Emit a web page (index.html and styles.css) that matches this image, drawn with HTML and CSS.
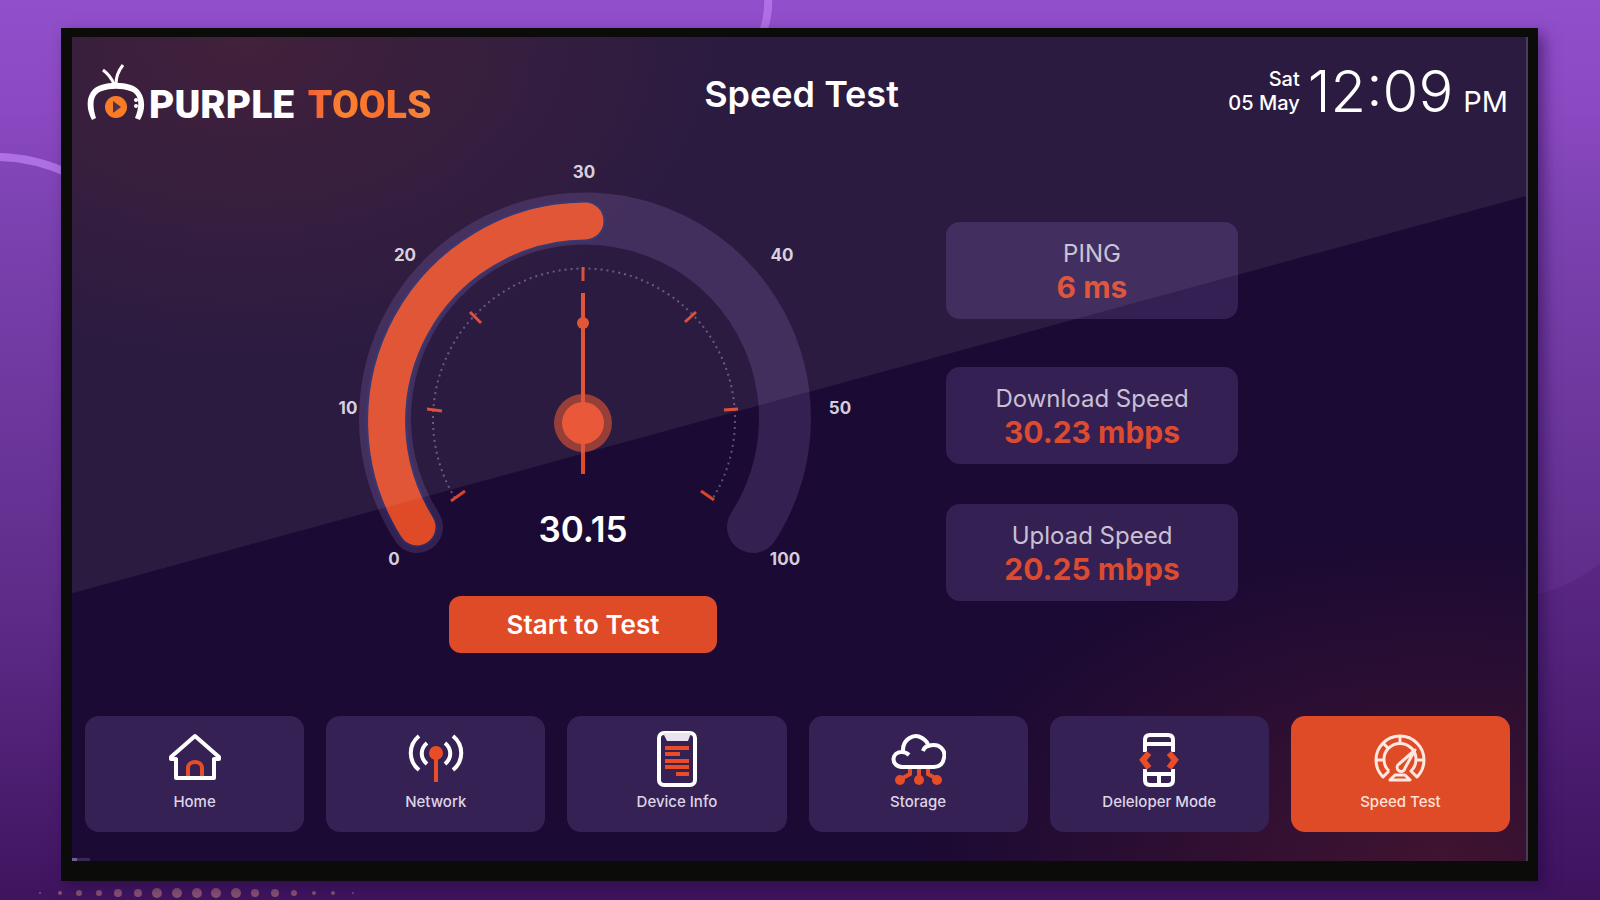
FILE: index.html
```html
<!DOCTYPE html>
<html lang="en">
<head>
    <meta charset="UTF-8">
    <meta name="viewport" content="width=device-width, initial-scale=1.0">
    <title>Purple Tools - Speed Test</title>
    <link rel="stylesheet" href="styles.css">
</head>
<body>
    <svg class="backdrop" viewBox="0 0 1600 900" preserveAspectRatio="none" aria-hidden="true">
        <path d="M1538 594 C1560 590 1580 578 1600 564 V900 H1538 Z" fill="#3c1060" opacity="0.2"/>
        <path d="M-4 157 C20 157 44 162 70 174" fill="none" stroke="#ae70e4" stroke-width="8"/>
        <path d="M768 -4 C769 12 767 22 762 34" fill="none" stroke="#ae70e4" stroke-width="8"/>
        <g fill="#8a5274">
            <circle cx="40" cy="893" r="1"/>
            <circle cx="60" cy="893" r="2"/>
            <circle cx="79" cy="893" r="3"/>
            <circle cx="99" cy="893" r="3"/>
            <circle cx="118" cy="893" r="4"/>
            <circle cx="138" cy="893" r="4"/>
            <circle cx="157" cy="893" r="5"/>
            <circle cx="177" cy="893" r="5"/>
            <circle cx="197" cy="893" r="5"/>
            <circle cx="216" cy="893" r="5"/>
            <circle cx="236" cy="893" r="5"/>
            <circle cx="255" cy="893" r="4"/>
            <circle cx="275" cy="893" r="4"/>
            <circle cx="294" cy="893" r="3"/>
            <circle cx="314" cy="893" r="2"/>
            <circle cx="333" cy="893" r="2"/>
            <circle cx="353" cy="893" r="1"/>
        </g>
    </svg>

    <div class="tv">
        <div class="screen">
            <header class="header">
                <div class="logo">
                    <svg class="logo-icon" width="58" height="58" viewBox="0 0 58 58" aria-hidden="true">
                        <path d="M27 20 C24 13 20 9 16 6" fill="none" stroke="#fff" stroke-width="3"/>
                        <path d="M29 20 C29 12 32 6 36 1" fill="none" stroke="#fff" stroke-width="3"/>
                        <path d="M5 56 C-3 42 0 25 14 21 C24 18 34 18 44 21 C57 25 61 42 53 56 L48 54 C53 42 53 30 43 27 C34 24 24 24 15 27 C5 30 5 42 9 54 Z" fill="#fff"/>
                        <circle cx="29" cy="43" r="11" fill="#f97316"/>
                        <path d="M26 37 L34 43 L26 49 Z" fill="#44213f"/>
                        <circle cx="49" cy="36" r="2" fill="#fff"/>
                        <circle cx="49" cy="42" r="2" fill="#fff"/>
                    </svg>
                    <span class="logo-text">PURPLE <span class="logo-accent">TOOLS</span></span>
                </div>
                <h1 class="title">Speed Test</h1>
                <div class="clock">
                    <div class="date">Sat<br>05 May</div>
                    <div class="time">12:09</div>
                    <div class="meridiem">PM</div>
                </div>
            </header>

            <main class="main">
                <section class="meter">
                    <svg class="gauge" viewBox="315 155 536 415" role="img" aria-label="Speed gauge">
                        <path d="M417 527 A200 200 0 1 1 753 527" fill="none" stroke="#7858a0" stroke-opacity="0.28" stroke-width="52" stroke-linecap="round"/>
                        <path d="M417 527 A200 200 0 0 1 585 221" fill="none" stroke="#2b2864" stroke-width="42" stroke-linecap="round"/>
                        <path d="M417 527 A200 200 0 0 1 585 221" fill="none" stroke="#df4a27" stroke-width="37" stroke-linecap="round"/>

                        <path d="M455 498 A151 151 0 1 1 713 498" fill="none" stroke="#5a5080" stroke-width="2" stroke-dasharray="2 4"/>
                        <g stroke="#d8452a" stroke-width="3">
                            <path d="M451 501 L465 491"/>
                            <path d="M427 409 L442 411"/>
                            <path d="M470 312 L481 323"/>
                            <path d="M583 267 L583 281"/>
                            <path d="M696 312 L685 322"/>
                            <path d="M724 410 L738 409"/>
                            <path d="M701 491 L714 500"/>
                        </g>

                        <circle cx="583" cy="423" r="29" fill="#df4a27" opacity="0.6"/>
                        <path d="M583 293 V474" stroke="#df4a27" stroke-width="4"/>
                        <circle cx="583" cy="323" r="6" fill="#df4a27"/>
                        <circle cx="583" cy="423" r="21" fill="#e84d2b"/>

                        <g class="gauge-label">
                            <text x="394" y="565">0</text>
                            <text x="348" y="414">10</text>
                            <text x="405" y="261">20</text>
                            <text x="584" y="178">30</text>
                            <text x="782" y="261">40</text>
                            <text x="840" y="414">50</text>
                            <text x="785" y="565">100</text>
                        </g>
                        <text class="gauge-value" x="583" y="542">30.15</text>
                    </svg>
                    <button class="start" type="button">Start to Test</button>
                </section>

                <section class="stats">
                    <div class="stat stat-ping">
                        <div class="stat-name">PING</div>
                        <div class="stat-value">6 ms</div>
                    </div>
                    <div class="stat">
                        <div class="stat-name">Download Speed</div>
                        <div class="stat-value">30.23 mbps</div>
                    </div>
                    <div class="stat">
                        <div class="stat-name">Upload Speed</div>
                        <div class="stat-value">20.25 mbps</div>
                    </div>
                </section>
            </main>

            <nav class="nav">
                <a class="nav-item" href="#">
                    <svg class="nav-icon" viewBox="0 0 56 56" aria-hidden="true">
                        <path class="accent" d="M21 46 V37 C21 29 35 29 35 37 V46"/>
                        <path class="line" d="M28 5 L52 26 V28 H47 V47 H9 V28 H4 V26 Z"/>
                    </svg>
                    <span>Home</span>
                </a>
                <a class="nav-item" href="#">
                    <svg class="nav-icon" viewBox="0 0 56 56" aria-hidden="true">
                        <path class="line" d="M11 5 C0 14 0 30 11 39"/>
                        <path class="line" d="M19 12 C12 18 12 27 19 33"/>
                        <path class="line" d="M37 12 C44 18 44 27 37 33"/>
                        <path class="line" d="M45 5 C56 14 56 30 45 39"/>
                        <path class="accent" d="M28 24 V51"/>
                        <circle cx="28" cy="22" r="7" fill="#e84d25"/>
                    </svg>
                    <span>Network</span>
                </a>
                <a class="nav-item" href="#">
                    <svg class="nav-icon" viewBox="0 0 56 56" aria-hidden="true">
                        <rect class="line" x="10" y="2" width="36" height="52" rx="5"/>
                        <path d="M14 2 H42 L39 10 H18 Z" fill="#e9e4f0"/>
                        <g class="accent">
                            <path d="M16 17 H40"/>
                            <path d="M16 23 H31"/>
                            <path d="M16 30 H40"/>
                            <path d="M16 36 H40"/>
                            <path d="M27 43 H40"/>
                        </g>
                    </svg>
                    <span>Device Info</span>
                </a>
                <a class="nav-item" href="#">
                    <svg class="nav-icon" viewBox="0 0 56 56" aria-hidden="true">
                        <g class="accent">
                            <path d="M20 36 V43 L11 48"/>
                            <path d="M29 36 V49"/>
                            <path d="M38 36 V43 L47 48"/>
                        </g>
                        <g fill="#e84d25">
                            <circle cx="10" cy="49" r="5"/>
                            <circle cx="29" cy="49" r="5"/>
                            <circle cx="47" cy="49" r="5"/>
                        </g>
                        <path class="line" d="M12 36 C0 35 1 20 13 21 C12 8 24 2 32 7 C37 10 38 13 38 15 C50 11 56 20 54 27 C53 33 49 36 44 36 Z"/>
                        <path class="line" d="M12 21 C15 21 17 22 19 24 M39 15 C36 15 34 17 33 20"/>
                    </svg>
                    <span>Storage</span>
                </a>
                <a class="nav-item" href="#">
                    <svg class="nav-icon" viewBox="0 0 56 56" aria-hidden="true">
                        <path class="line" d="M14 21 V9 Q14 4 19 4 H37 Q42 4 42 9 V21 M14 13 H42"/>
                        <path class="line" d="M14 38 V49 Q14 54 19 54 H37 Q42 54 42 49 V38 M14 43 H42 M28 43 V53"/>
                        <path class="accent thick" d="M18 22 L12 29 L18 37"/>
                        <path class="accent thick" d="M38 22 L44 29 L38 37"/>
                    </svg>
                    <span>Deleloper Mode</span>
                </a>
                <a class="nav-item active" href="#" aria-current="page">
                    <svg class="nav-icon" viewBox="0 0 56 56" aria-hidden="true">
                        <g class="dial">
                            <path d="M11 46 A24 24 0 1 1 45 46 L39 40 A16 16 0 1 0 17 40 Z" stroke="none"/>
                            <path d="M17 40 L11 46 A24 24 0 1 1 45 46 L39 40 A16 16 0 1 0 17 40"/>
                            <path d="M28 5 V12 M4 29 H12 M11 12 L17 18 M44 29 H52"/>
                            <path d="M27 33 L43 19 L33 37 A4 4 0 1 1 27 33 Z"/>
                            <path d="M23 44 H33 L38 49 H18 Z"/>
                        </g>
                    </svg>
                    <span>Speed Test</span>
                </a>
            </nav>

            <div class="status-mark"></div>
            <div class="glare"></div>
        </div>
    </div>
</body>
</html>
```
FILE: styles.css
```css
* {
    box-sizing: border-box;
}

body {
    margin: 0;
    min-height: 100vh;
    padding: 28px 62px 19px 61px;
    display: flex;
    font-family: Inter, "Liberation Sans", sans-serif;
    color: #fff;
    background: linear-gradient(#9150cb 0%, #8b49c2 12%, #7c42b1 24%, #5c2a86 70%, #3f145e 100%);
}

.backdrop {
    position: fixed;
    inset: 0;
    width: 100%;
    height: 100%;
}

/* TV frame */
.tv {
    position: relative;
    flex: 1;
    display: flex;
    padding: 9px 10px 20px 11px;
    background: #0b0b0a;
    box-shadow: 6px 6px 14px rgba(30, 5, 60, 0.5);
}

.screen {
    position: relative;
    flex: 1;
    display: flex;
    flex-direction: column;
    padding: 26px 16px 29px 13px;
    border-right: 2px solid #4a3d5c;
    background:
        radial-gradient(ellipse 500px 340px at 12% 0%, rgba(76, 24, 40, 0.5), rgba(76, 24, 40, 0)),
        radial-gradient(ellipse 520px 320px at 94% 100%, rgba(76, 22, 48, 0.75), rgba(76, 22, 48, 0)),
        #1b0a33;
}

.glare {
    position: absolute;
    inset: 0;
    background: rgba(255, 255, 255, 0.07);
    clip-path: polygon(0 0, 100% 0, 100% 19.3%, 0 67.5%);
    pointer-events: none;
}

.status-mark {
    position: absolute;
    left: 0;
    bottom: 0;
    width: 18px;
    height: 3px;
    background: linear-gradient(90deg, #6d6090 30%, #37285a 30%);
}

/* Header */
.header {
    display: grid;
    grid-template-columns: 1fr auto 1fr;
    align-items: center;
}

.logo {
    display: flex;
    align-items: flex-end;
    gap: 4px;
    padding-left: 2px;
}

.logo-text {
    font-family: Roboto, "Liberation Sans", sans-serif;
    font-weight: 900;
    font-size: 39px;
    line-height: 34px;
}

.logo-accent {
    margin-left: 4px;
    background: linear-gradient(90deg, #f2542a, #fb7a20 30%, #f8641c 60%, #f5802c);
    -webkit-background-clip: text;
    background-clip: text;
    color: transparent;
}

.title {
    margin: 0;
    padding: 2px 0 0 8px;
    font-size: 36px;
    font-weight: 600;
    line-height: 44px;
}

.clock {
    display: flex;
    justify-content: flex-end;
    align-items: baseline;
    padding: 0 2px 4px 0;
}

.date {
    align-self: center;
    font-size: 20px;
    font-weight: 500;
    line-height: 24px;
    text-align: right;
    margin-right: 8px;
}

.time {
    font-size: 58px;
    font-weight: 300;
    line-height: 56px;
    margin-right: 10px;
}

.meridiem {
    font-size: 29px;
}

/* Gauge and results */
.main {
    display: grid;
    grid-template-columns: minmax(400px, 536px) 292px;
    column-gap: 95px;
    padding: 32px 0 0 230px;
}

.meter {
    display: flex;
    flex-direction: column;
    align-items: center;
    gap: 26px;
}

.gauge {
    display: block;
    width: 100%;
}

.gauge-label text {
    font-size: 17px;
    font-weight: 700;
    fill: #d4cedc;
    text-anchor: middle;
}

.gauge-value {
    font-size: 35px;
    font-weight: 600;
    fill: #fff;
    text-anchor: middle;
}

.start {
    width: 268px;
    height: 57px;
    border: none;
    border-radius: 12px;
    background: #df4a27;
    color: #fff;
    font-family: inherit;
    font-size: 26px;
    font-weight: 600;
    cursor: pointer;
}

.stats {
    padding-top: 67px;
}

.stat {
    padding: 17px 0 13px;
    border-radius: 14px;
    background: rgba(120, 88, 168, 0.28);
    text-align: center;
}

.stat + .stat {
    margin-top: 40px;
}

.stat-ping {
    margin-bottom: 48px;
}

.stat-name {
    font-size: 24px;
    line-height: 30px;
    color: #c8c0d4;
}

.stat-value {
    font-size: 30px;
    line-height: 37px;
    font-weight: 700;
    color: #dc4a30;
}

/* Bottom navigation */
.nav {
    display: grid;
    grid-template-columns: repeat(6, 1fr);
    gap: 22px;
    margin-top: auto;
}

.nav-item {
    display: flex;
    flex-direction: column;
    align-items: center;
    gap: 6px;
    padding: 15px 0 21px;
    border-radius: 14px;
    background: #362154;
    color: #ddd5e6;
    font-size: 15px;
    font-weight: 500;
    line-height: 18px;
    text-decoration: none;
}

.nav-item.active {
    background: #df4a27;
    color: #ffe2d8;
}

.nav-icon {
    width: 56px;
    height: 56px;
    fill: none;
}

.line {
    stroke: #fff;
    stroke-width: 4;
    stroke-linejoin: round;
}

.accent {
    stroke: #e84d25;
    stroke-width: 4;
}

.thick {
    stroke-width: 6;
}

.dial {
    stroke: #ffe8e0;
    stroke-width: 3;
    stroke-linejoin: round;
}
```
